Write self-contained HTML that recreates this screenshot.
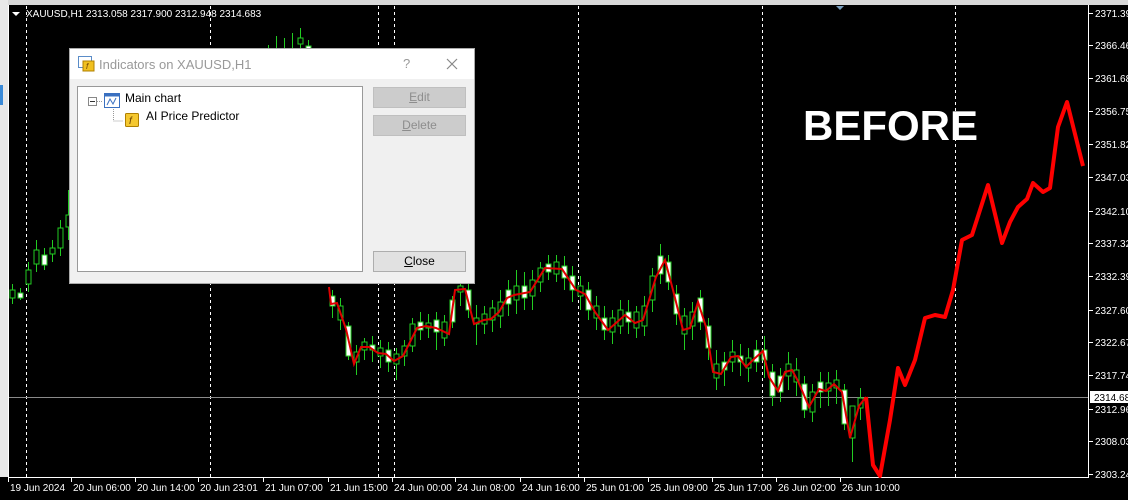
<!DOCTYPE html>
<html><head><meta charset="utf-8"><style>
html,body{margin:0;padding:0;width:1128px;height:500px;overflow:hidden;background:#000;font-family:"Liberation Sans",sans-serif}
#c{position:absolute;left:0;top:0}
.dlg{position:absolute;left:69px;top:48px;width:404px;height:234px;background:#f0f0f0;border:1px solid #aaa;font-size:12px}
.tb{height:30px;background:#fff;position:relative;color:#999;font-size:13px}
.list{position:absolute;left:7px;top:37px;width:284px;height:184px;background:#fff;border:1px solid #999}
.btn{position:absolute;left:303px;width:91px;height:19px;border:1px solid #adadad;background:#e1e1e1;text-align:center;line-height:19px;font-size:12px}
.dis{background:#cccccc;border-color:#bfbfbf;color:#8d8d8d}
</style></head><body>
<svg id="c" width="1128" height="500" xmlns="http://www.w3.org/2000/svg" font-family="Liberation Sans, sans-serif">
<rect x="0" y="0" width="1128" height="5" fill="#d8d8d8"/><rect x="0" y="0" width="8" height="500" fill="#e8e8e8"/>
<rect x="0" y="477" width="1128" height="23" fill="#000"/>
<path d="M8.5 5v472.5H1088.5V5" stroke="#fff" fill="none"/>
<rect x="0" y="85" width="3" height="20" fill="#3a8ad8"/>
<g stroke="#fff" stroke-dasharray="3 3"><path d="M26.5 6V477M210.5 6V477M378.5 6V477M394.5 6V477M578.5 6V477M762.5 6V477M955.5 6V477"/></g>
<path d="M9 397.5H1088" stroke="#8a8a8a"/>
<path stroke="#22cc22" d="M12.5 284V304M20.5 288V300M28.5 262V292M36.5 240V272M44.5 248V270M52.5 240V262M60.5 220V256M68.5 190V240
M268.5 45V70M276.5 36V62M284.5 38V54M292.5 33V50M300.5 28V55M308.5 40V62
M332.5 290V318M340.5 298V330M348.5 322V360M356.5 345V375M364.5 338V360M372.5 336V362M380.5 340V368M388.5 342V372M396.5 348V380M404.5 340V366M412.5 318V352M420.5 312V340M428.5 314V338M436.5 312V350M444.5 315V346M452.5 296V328M460.5 270V306M468.5 282V318M476.5 305V345M484.5 306V334M492.5 300V332M500.5 290V328M508.5 280V316M516.5 270V314M524.5 272V310M532.5 270V310M540.5 262V292M548.5 255V280M556.5 255V282M564.5 256V290M572.5 266V302M580.5 276V310M588.5 282V320M596.5 296V330M604.5 306V340M612.5 310V344M620.5 300V334M628.5 300V334M636.5 306V338M644.5 296V336M652.5 268V312M660.5 244V284M668.5 255V290M676.5 285V325M684.5 308V350M692.5 302V340M700.5 290V330M708.5 318V360M716.5 350V390M724.5 352V386M732.5 340V372M740.5 344V376M748.5 348V382M756.5 340V372M764.5 336V378M772.5 364V406M780.5 368V402M788.5 352V390M796.5 358V396M804.5 376V418M812.5 384V422M820.5 372V408M828.5 372V406M836.5 370V404M844.5 384V430M852.5 412V462M860.5 388V420"/>
<g stroke="#22cc22">
<rect x="10" y="290" width="5" height="8" fill="#000"/><rect x="18" y="293" width="5" height="5" fill="#fff"/><rect x="26" y="270" width="5" height="14" fill="#000"/><rect x="34" y="250" width="5" height="14" fill="#000"/><rect x="42" y="255" width="5" height="10" fill="#fff"/><rect x="50" y="248" width="5" height="6" fill="#000"/><rect x="58" y="228" width="5" height="20" fill="#000"/><rect x="66" y="215" width="5" height="12" fill="#000"/>
<rect x="298" y="38" width="5" height="6" fill="#000"/><rect x="306" y="46" width="5" height="6" fill="#fff"/>
<rect x="330" y="296" width="5" height="10" fill="#fff"/><rect x="338" y="306" width="5" height="14" fill="#000"/><rect x="346" y="326" width="5" height="30" fill="#fff"/><rect x="354" y="352" width="5" height="10" fill="#000"/><rect x="362" y="342" width="5" height="8" fill="#000"/><rect x="370" y="345" width="5" height="5" fill="#fff"/><rect x="378" y="348" width="5" height="8" fill="#000"/><rect x="386" y="350" width="5" height="12" fill="#fff"/><rect x="394" y="354" width="5" height="10" fill="#000"/><rect x="402" y="346" width="5" height="10" fill="#000"/><rect x="410" y="324" width="5" height="22" fill="#000"/><rect x="418" y="322" width="5" height="8" fill="#fff"/><rect x="426" y="323" width="5" height="5" fill="#000"/><rect x="434" y="320" width="5" height="12" fill="#fff"/><rect x="442" y="322" width="5" height="16" fill="#000"/><rect x="450" y="300" width="5" height="22" fill="#fff"/><rect x="458" y="286" width="5" height="6" fill="#000"/><rect x="466" y="290" width="5" height="20" fill="#fff"/><rect x="474" y="318" width="5" height="6" fill="#000"/><rect x="482" y="314" width="5" height="10" fill="#000"/><rect x="490" y="308" width="5" height="12" fill="#000"/><rect x="498" y="302" width="5" height="14" fill="#000"/><rect x="506" y="290" width="5" height="14" fill="#fff"/><rect x="514" y="286" width="5" height="14" fill="#000"/><rect x="522" y="286" width="5" height="12" fill="#fff"/><rect x="530" y="280" width="5" height="16" fill="#000"/><rect x="538" y="268" width="5" height="14" fill="#000"/><rect x="546" y="264" width="5" height="8" fill="#fff"/><rect x="554" y="262" width="5" height="12" fill="#000"/><rect x="562" y="266" width="5" height="12" fill="#fff"/><rect x="570" y="276" width="5" height="14" fill="#fff"/><rect x="578" y="286" width="5" height="10" fill="#000"/><rect x="586" y="290" width="5" height="20" fill="#fff"/><rect x="594" y="306" width="5" height="12" fill="#000"/><rect x="602" y="318" width="5" height="12" fill="#fff"/><rect x="610" y="318" width="5" height="14" fill="#000"/><rect x="618" y="310" width="5" height="16" fill="#000"/><rect x="626" y="312" width="5" height="10" fill="#fff"/><rect x="634" y="312" width="5" height="16" fill="#000"/><rect x="642" y="306" width="5" height="20" fill="#000"/><rect x="650" y="276" width="5" height="24" fill="#000"/><rect x="658" y="256" width="5" height="18" fill="#fff"/><rect x="666" y="262" width="5" height="20" fill="#fff"/><rect x="674" y="294" width="5" height="20" fill="#fff"/><rect x="682" y="316" width="5" height="18" fill="#000"/><rect x="690" y="312" width="5" height="14" fill="#000"/><rect x="698" y="298" width="5" height="24" fill="#fff"/><rect x="706" y="326" width="5" height="22" fill="#fff"/><rect x="714" y="364" width="5" height="14" fill="#000"/><rect x="722" y="362" width="5" height="8" fill="#fff"/><rect x="730" y="352" width="5" height="10" fill="#000"/><rect x="738" y="356" width="5" height="6" fill="#fff"/><rect x="746" y="358" width="5" height="10" fill="#000"/><rect x="754" y="350" width="5" height="12" fill="#fff"/><rect x="762" y="350" width="5" height="10" fill="#fff"/><rect x="770" y="372" width="5" height="24" fill="#fff"/><rect x="778" y="376" width="5" height="16" fill="#fff"/><rect x="786" y="364" width="5" height="12" fill="#000"/><rect x="794" y="370" width="5" height="12" fill="#000"/><rect x="802" y="384" width="5" height="26" fill="#fff"/><rect x="810" y="392" width="5" height="20" fill="#000"/><rect x="818" y="382" width="5" height="10" fill="#fff"/><rect x="826" y="383" width="5" height="8" fill="#000"/><rect x="834" y="380" width="5" height="8" fill="#000"/><rect x="842" y="390" width="5" height="34" fill="#fff"/><rect x="850" y="406" width="5" height="32" fill="#000"/><rect x="858" y="398" width="5" height="10" fill="#000"/>
</g>
<polyline points="329,287 331,304 337,303 346,329 354,364 361,347 369,347 378,353 386,354 394,361 403,356 417,328 426,326 436,328 449,334 455,290 465,289 474,324 484,320 491,319 499,312 507,298 514,295 530,292 545,268 562,269 576,290 585,294 595,312 608,330 625,315 635,323 643,320 656,277 665,260 673,290 683,330 690,328 698,302 706,327 713,372 721,374 731,357 738,356 746,367 754,359 763,351 769,377 778,391 785,372 792,370 798,381 809,407 819,389 826,391 834,384 842,392 850,438 859,406 866,397" fill="none" stroke="#e00000" stroke-width="2"/>
<polyline points="866,397 873,465 880,476 890,420 898,368 905,385 915,360 925,318 935,315 945,317 953,290 962,240 972,235 988,185 1002,243 1010,222 1018,207 1027,199 1033,183 1043,192 1050,188 1058,127 1067,102 1083,166" fill="none" stroke="#ff0000" stroke-width="4" stroke-linejoin="round"/>
<g fill="#fff" font-size="10">
<path stroke="#fff" d="M1089 13.5h4M1089 45.5h4M1089 78.5h4M1089 111.5h4M1089 144.5h4M1089 177.5h4M1089 211.5h4M1089 243.5h4M1089 276.5h4M1089 310.5h4M1089 342.5h4M1089 375.5h4M1089 409.5h4M1089 441.5h4M1089 474.5h4"/>
<text x="1095" y="17">2371.39</text><text x="1095" y="49">2366.46</text><text x="1095" y="82">2361.68</text><text x="1095" y="115">2356.75</text><text x="1095" y="148">2351.82</text><text x="1095" y="181">2347.03</text><text x="1095" y="215">2342.10</text><text x="1095" y="247">2337.32</text><text x="1095" y="280">2332.39</text><text x="1095" y="314">2327.60</text><text x="1095" y="346">2322.67</text><text x="1095" y="379">2317.74</text><text x="1095" y="413">2312.96</text><text x="1095" y="445">2308.03</text><text x="1095" y="478">2303.24</text>
<rect x="1090" y="391" width="38" height="12"/><text x="1094" y="401" fill="#000">2314.68</text>
<path stroke="#fff" d="M8.5 478v4M71.5 478v4M135.5 478v4M198.5 478v4M263.5 478v4M328.5 478v4M392.5 478v4M455.5 478v4M520.5 478v4M584.5 478v4M648.5 478v4M712.5 478v4M776.5 478v4M840.5 478v4"/>
<text x="10" y="491">19 Jun 2024</text><text x="73" y="491">20 Jun 06:00</text><text x="137" y="491">20 Jun 14:00</text><text x="200" y="491">20 Jun 23:01</text><text x="265" y="491">21 Jun 07:00</text><text x="330" y="491">21 Jun 15:00</text><text x="394" y="491">24 Jun 00:00</text><text x="457" y="491">24 Jun 08:00</text><text x="522" y="491">24 Jun 16:00</text><text x="586" y="491">25 Jun 01:00</text><text x="650" y="491">25 Jun 09:00</text><text x="714" y="491">25 Jun 17:00</text><text x="778" y="491">26 Jun 02:00</text><text x="842" y="491">26 Jun 10:00</text>
<path d="M12 12l4 4 4-4z"/><text x="26" y="17">XAUUSD,H1  2313.058 2317.900 2312.948 2314.683</text>
</g>
<path d="M836 6l4 4 4-4z" fill="#7aa0c0"/>
</svg>
<div class="dlg">
 <div class="tb">
  <svg style="position:absolute;left:8px;top:7px" width="18" height="16"><rect x="0.5" y="0.5" width="13" height="11" fill="#fff" stroke="#5a8cc8"/><rect x="5" y="5" width="11" height="10" fill="#f0c020" stroke="#b08000"/><text x="8" y="13" font-size="8" fill="#704000" font-style="italic">f</text></svg>
  <span style="position:absolute;left:29px;top:8px">Indicators on XAUUSD,H1</span>
  <span style="position:absolute;left:333px;top:7px">?</span>
  <svg style="position:absolute;left:376px;top:9px" width="12" height="12"><path d="M1 1L11 11M11 1L1 11" stroke="#888" stroke-width="1.2"/></svg>
 </div>
 <div class="list">
  <svg style="position:absolute;left:8px;top:5px" width="60" height="40">
   <rect x="2.5" y="5.5" width="8" height="8" fill="#fff" stroke="#888"/><path d="M4 9.5h5" stroke="#333"/>
   <path d="M11 9.5h6" stroke="#999" stroke-dasharray="1 1"/>
   <rect x="18.5" y="1.5" width="15" height="14" fill="#fff" stroke="#3a70c0"/><rect x="18.5" y="1.5" width="15" height="3" fill="#3a70c0"/>
   <path d="M21 13l3-6 3 5 3-6" stroke="#3a70c0" fill="none"/>
   <path d="M27.5 17v12h10" stroke="#999" stroke-dasharray="1 1" fill="none"/>
   <rect x="39.5" y="21.5" width="13" height="13" rx="1" fill="#f5c830" stroke="#b08000"/><text x="43" y="32" font-size="10" fill="#6a4000" font-style="italic">f</text>
  </svg>
  <span style="position:absolute;left:47px;top:4px;color:#000">Main chart</span>
  <span style="position:absolute;left:68px;top:22px;color:#000">AI Price Predictor</span>
 </div>
 <div class="btn dis" style="top:38px"><u>E</u>dit</div>
 <div class="btn dis" style="top:66px"><u>D</u>elete</div>
 <div class="btn" style="top:202px"><u>C</u>lose</div>
</div>
<div style="position:absolute;left:803px;top:102px;color:#fff;font-weight:bold;font-size:42px">BEFORE</div>
</body></html>
